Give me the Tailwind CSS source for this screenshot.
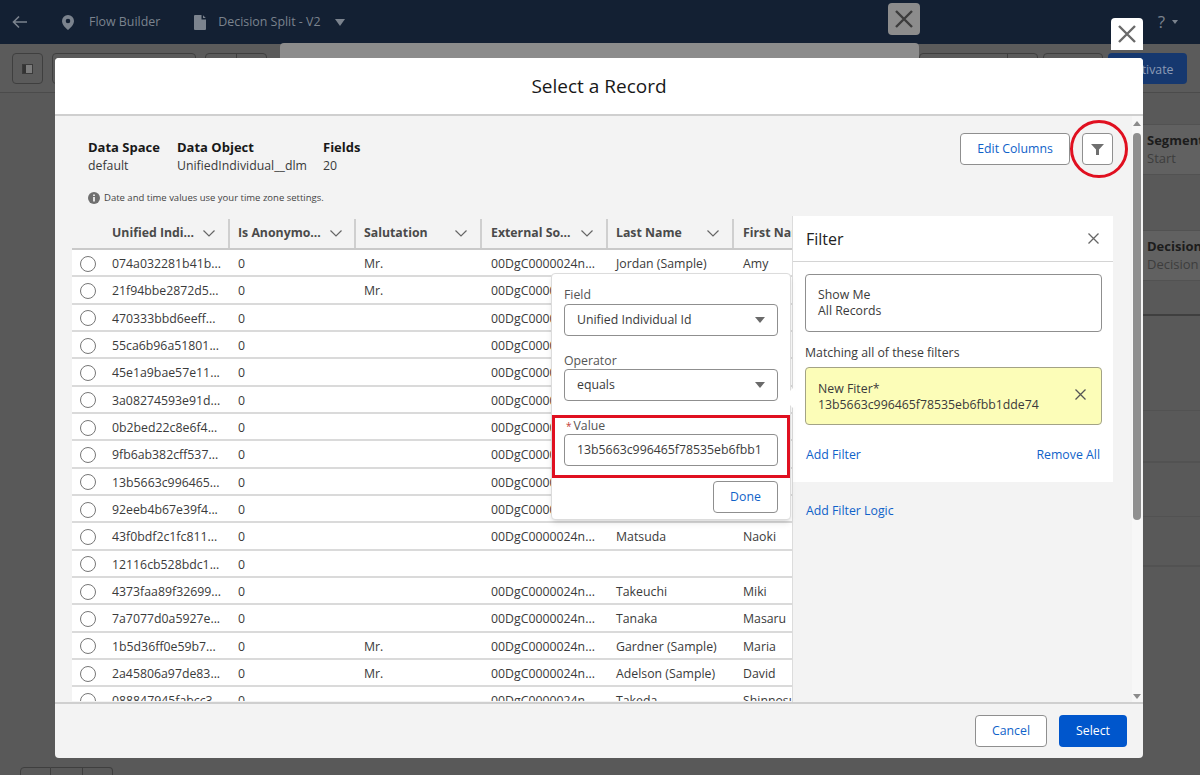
<!DOCTYPE html>
<html lang="en">
<head>
    <meta charset="UTF-8">
    <meta name="viewport" content="width=device-width, initial-scale=1.0">
    <title>Select a Record</title>
    <script src="https://cdn.jsdelivr.net/npm/@tailwindcss/browser@4"></script>
</head>
<body class="relative h-[775px] w-[1200px] overflow-hidden bg-[#595959] font-['Open_Sans','Noto_Sans',sans-serif] text-[12.3px] text-[#3a3a3a]">

    <!-- page behind the modal -->
    <header class="flex h-[44px] items-center bg-[#132033] text-[12.4px] text-[#7b838e]">
        <svg class="ml-[12px] w-[16px] h-[14px]" viewBox="0 0 16 14" fill="none" stroke="#7b838e" stroke-width="1.6"><path d="M15 7H2M7 1.5 1.5 7 7 12.5"/></svg>
        <svg class="ml-[34px] w-[12px] h-[15px]" viewBox="0 0 12 15" fill="#7b838e"><path fill-rule="evenodd" d="M6 0a6 6 0 0 1 6 6c0 3.5-3.6 7.300-6 9-2.400-1.700-6-5.500-6-9a6 6 0 0 1 6-6Zm0 3.700a2.300 2.300 0 1 0 0 4.600 2.300 2.300 0 0 0 0-4.600Z"/></svg>
        <span class="ml-[15px]">Flow Builder</span>
        <svg class="ml-[34px] w-[12px] h-[15px]" viewBox="0 0 12 15" fill="#7b838e"><path d="M1 0h6.500v4.500H12V14a1 1 0 0 1-1 1H1a1 1 0 0 1-1-1V1a1 1 0 0 1 1-1Zm8 .3L11.800 3H9Z"/></svg>
        <span class="ml-[12px]">Decision Split - V2</span>
        <svg class="ml-[14px] w-[10px] h-[7px]" viewBox="0 0 10 7" fill="#7b838e"><path d="M0 0h10L5 7Z"/></svg>
        <span class="ml-auto text-[17px]">?</span>
        <svg class="ml-[7px] mr-[22px] w-[6px] h-[4px]" viewBox="0 0 6 4" fill="#7b838e"><path d="M0 0h6L3 4Z"/></svg>
    </header>
    <div class="flex h-[49px] items-start border-b border-[#4b4b4b] bg-[#5b5b5b] pt-[9px] pl-[12px] pr-[13px]">
        <div class="flex h-[31px] w-[31px] items-center justify-center rounded border border-[#3f3f3f]">
            <svg class="w-[11px] h-[10px]" viewBox="0 0 11 10"><rect width="11" height="10" fill="#7c7c7c"/><rect x=".5" y=".5" width="10" height="9" fill="none" stroke="#3a3a3a"/><rect x="1" y="1" width="3" height="8" fill="#333"/></svg>
        </div>
        <div class="ml-[9px] h-[31px] w-[144px] rounded border border-[#3f3f3f]"></div>
        <div class="ml-[9px] flex h-[31px] w-[62px] rounded border border-[#3f3f3f]"><div class="w-[31px] border-r border-[#3f3f3f]"></div></div>
        <div class="ml-auto flex h-[31px] w-[119px] justify-end rounded border border-[#3f3f3f]"><div class="w-[30px] border-l border-[#3f3f3f]"></div></div>
        <div class="ml-[5px] h-[31px] w-[60px] rounded border border-[#3f3f3f]"></div>
        <div class="ml-[5px] flex h-[31px] w-[79px] items-center rounded bg-[#16386f] pl-[20px] pt-[3px] text-[#8c9bb5]">Activate</div>
    </div>
    <div class="ml-auto w-[57px] pt-[31px] text-[13px] whitespace-nowrap overflow-hidden">
        <div class="h-[51px] border-y border-[#525252] bg-[#616161] pl-[4px] pt-[6px] leading-[18px]">
            <div class="font-bold text-[#1c1c1c]">Segment</div>
            <div class="text-[#3d3d3d]">Start</div>
        </div>
        <div class="mt-[55px] h-[51px] border-y border-[#525252] bg-[#616161] pl-[4px] pt-[6px] leading-[18px]">
            <div class="font-bold text-[#1c1c1c]">Decision</div>
            <div class="text-[#3d3d3d]">Decision</div>
        </div>
        <div class="mt-[33px] h-[96px] border-t-2 border-[#3f3f3f]"></div>
        <div class="h-[51px] border-t border-[#525252]"></div>
        <div class="h-[55px] border-t-2 border-[#525252]"></div>
        <div class="h-[49px] border-t border-[#525252]"></div>
        <div class="border-t-2 border-[#525252]"></div>
    </div>
    <div class="absolute left-[280px] top-[43px] h-[20px] w-[639px] rounded-t bg-[#8c8c8c]"></div>
    <div class="absolute left-[20px] top-[767px] flex h-[20px]">
        <div class="w-[31px] rounded-tl border border-[#3f3f3f]"></div>
        <div class="w-[32px] border-y border-r border-[#3f3f3f]"></div>
        <div class="w-[30px] rounded-tr border-y border-r border-[#3f3f3f]"></div>
    </div>

    <!-- close buttons -->
    <button class="absolute left-[888px] top-[3px] flex h-[32px] w-[32px] items-center justify-center rounded bg-[#8c8c8c]">
        <svg class="w-[18px] h-[18px]" viewBox="0 0 18 18" stroke="#3c3c3c" stroke-width="2.400"><path d="M1 1l16 16M17 1 1 17"/></svg>
    </button>
    <button class="absolute left-[1111px] top-[18px] flex h-[32px] w-[32px] items-center justify-center rounded-t bg-white">
        <svg class="w-[18px] h-[18px]" viewBox="0 0 18 18" stroke="#6a6a6a" stroke-width="2.400"><path d="M1 1l16 16M17 1 1 17"/></svg>
    </button>

    <!-- modal -->
    <div class="absolute left-[55px] top-[58px] flex h-[700px] w-[1088px] flex-col overflow-hidden rounded bg-[#f3f3f3]">
        <div class="flex h-[58px] shrink-0 items-center justify-center border-b-2 border-[#cfcfcf] bg-white pt-[1px] text-[19px] text-[#181818]">Select a Record</div>

        <div class="relative min-h-0 flex-1">
            <div class="flex h-[100px] items-start pt-[17px] pl-[33px] pr-[30px]">
                <div class="pt-[5px] leading-[18.5px]">
                    <div class="flex">
                        <div class="w-[89px]"><div class="text-[13px] font-bold text-[#181818]">Data Space</div><div>default</div></div>
                        <div class="w-[146px]"><div class="text-[13px] font-bold text-[#181818]">Data Object</div><div>UnifiedIndividual__dlm</div></div>
                        <div><div class="text-[13px] font-bold text-[#181818]">Fields</div><div>20</div></div>
                    </div>
                    <div class="mt-[14px] flex items-center gap-[4px] text-[9.500px] text-[#444]">
                        <svg class="w-[12px] h-[12px]" viewBox="0 0 12 12"><circle cx="6" cy="6" r="6" fill="#6f6f6f"/><path d="M5.200 5h1.600v4.500H5.200ZM5.200 2.500h1.600v1.500H5.200Z" fill="#fff"/></svg>
                        <span>Date and time values use your time zone settings.</span>
                    </div>
                </div>
                <button class="ml-auto h-[32px] w-[110px] rounded border border-[#8f8f8f] bg-white pt-[1px] text-[#0f62c9]">Edit Columns</button>
                <button class="ml-[12px] flex h-[32px] w-[31px] items-center justify-center rounded border border-[#8f8f8f] bg-white">
                    <svg class="w-[13px] h-[11px]" viewBox="0 0 13 11" fill="#6f6f6f"><path d="M0 0h13L8 5.500V11H5V5.500Z"/></svg>
                </button>
            </div>
            <div class="absolute left-[1015px] top-[4px] h-[58px] w-[58px] rounded-full border-[3px] border-[#e01020]"></div>

            <!-- records table -->
            <div id="records" class="ml-[17px] h-[485px] w-[721px] overflow-hidden">
                <div class="grid h-[34px] grid-cols-[32px_126px_126px_126px_126px_126px_160px] items-stretch border-b-2 border-[#c9c9c9] pt-[3px] font-bold text-[#4a4a4a]">
                    <div></div>
                    <div class="flex items-center justify-between border-r-2 border-[#cfcfcf] pl-[8px] pr-[13px]"><span>Unified Indi...</span><svg class="w-[12px] h-[7px]" viewBox="0 0 12 7" fill="none" stroke="#666" stroke-width="1.200"><path d="M.5.500 6 6 11.500.500"/></svg></div>
                    <div class="flex items-center justify-between border-r-2 border-[#cfcfcf] pl-[8px] pr-[12px]"><span>Is Anonymo...</span><svg class="w-[12px] h-[7px]" viewBox="0 0 12 7" fill="none" stroke="#666" stroke-width="1.200"><path d="M.5.500 6 6 11.500.500"/></svg></div>
                    <div class="flex items-center justify-between border-r-2 border-[#cfcfcf] pl-[8px] pr-[13px]"><span>Salutation</span><svg class="w-[12px] h-[7px]" viewBox="0 0 12 7" fill="none" stroke="#666" stroke-width="1.200"><path d="M.5.500 6 6 11.500.500"/></svg></div>
                    <div class="flex items-center justify-between border-r-2 border-[#cfcfcf] pl-[9px] pr-[13px]"><span>External So...</span><svg class="w-[12px] h-[7px]" viewBox="0 0 12 7" fill="none" stroke="#666" stroke-width="1.200"><path d="M.5.500 6 6 11.500.500"/></svg></div>
                    <div class="flex items-center justify-between border-r-2 border-[#cfcfcf] pl-[8px] pr-[13px]"><span>Last Name</span><svg class="w-[12px] h-[7px]" viewBox="0 0 12 7" fill="none" stroke="#666" stroke-width="1.200"><path d="M.5.500 6 6 11.500.500"/></svg></div>
                    <div class="flex items-center pl-[9px]"><span>First Name</span></div>
                </div>
            </div>

            <!-- filter panel -->
            <div class="absolute left-[737px] top-[100px] bottom-0 w-[340px] border-l border-[#dcdcdc] bg-[#f3f3f3]">
                <div class="h-[266px] w-[320px] bg-white">
                    <div class="flex h-[46px] items-center justify-between border-b border-[#d4d4d4] pl-[13px] pr-[14px] text-[16px] text-[#222]">
                        <span>Filter</span>
                        <svg class="w-[11px] h-[11px]" viewBox="0 0 11 11" stroke="#666" stroke-width="1.300"><path d="M.5.500l10 10M10.500.500l-10 10"/></svg>
                    </div>
                    <div class="px-[12px]">
                        <div class="mt-[12px] flex h-[58px] w-[297px] flex-col justify-center rounded border border-[#8f8f8f] pl-[12px] leading-[16px]">
                            <div>Show Me</div>
                            <div>All Records</div>
                        </div>
                        <div class="mt-[12px] leading-[17px]">Matching all of these filters</div>
                        <div class="mt-[6px] flex h-[58px] w-[297px] items-center justify-between rounded border border-[#a3a386] bg-[#fcfdb8] pl-[12px] pr-[15px] pt-[1px] leading-[16px]">
                            <div><div>New Fiter*</div><div>13b5663c996465f78535eb6fbb1dde74</div></div>
                            <svg class="mb-[4px] w-[11px] h-[11px]" viewBox="0 0 11 11" stroke="#555" stroke-width="1.300"><path d="M.5.500l10 10M10.500.500l-10 10"/></svg>
                        </div>
                        <div class="mt-[21px] flex w-[295px] justify-between pl-[1px] text-[#0f62c9]">
                            <span>Add Filter</span>
                            <span>Remove All</span>
                        </div>
                    </div>
                </div>
                <div class="mt-[20px] pl-[13px] text-[#0f62c9]">Add Filter Logic</div>
            </div>

            <!-- field popover -->
            <div class="absolute left-[496px] top-[157px] h-[247px] w-[240px] rounded border border-[#dcdcdc] bg-white px-[12px] shadow-md">
                <div class="absolute left-[234px] top-[117px] h-[14px] w-[14px] rotate-45 bg-white"></div>
                <div class="relative">
                    <div class="mt-[13px] leading-[16px] text-[#555]">Field</div>
                    <div class="mt-[1px] flex h-[32px] items-center justify-between rounded border border-[#8f8f8f] px-[12px]">
                        <span>Unified Individual Id</span>
                        <svg class="w-[10px] h-[6px]" viewBox="0 0 10 6" fill="#6a6a6a"><path d="M0 0h10L5 6Z"/></svg>
                    </div>
                    <div class="mt-[17px] leading-[16px] text-[#555]">Operator</div>
                    <div class="flex h-[32px] items-center justify-between rounded border border-[#8f8f8f] px-[12px]">
                        <span>equals</span>
                        <svg class="w-[10px] h-[6px]" viewBox="0 0 10 6" fill="#6a6a6a"><path d="M0 0h10L5 6Z"/></svg>
                    </div>
                    <div class="-mx-[12px] mt-[14px] h-[63px] border-[3px] border-[#e01020] px-[9px]">
                        <div class="mt-[1px] flex items-center gap-[2px] pl-[2px] leading-[14px] text-[#555]"><span class="text-[10px] text-[#c23934]">*</span><span>Value</span></div>
                        <div class="mt-[1px] flex h-[32px] items-center rounded border border-[#8f8f8f] px-[12px] whitespace-nowrap overflow-hidden">13b5663c996465f78535eb6fbb1</div>
                    </div>
                    <div class="mt-[3px] flex justify-end">
                        <button class="h-[32px] w-[65px] rounded border border-[#8f8f8f] bg-white text-[#0f62c9]">Done</button>
                    </div>
                </div>
            </div>

            <!-- scrollbar -->
            <div class="absolute right-[1px] top-0 bottom-0 flex w-[10px] flex-col items-center bg-[#f7f7f7]">
                <svg class="mt-[5px] w-[8px] h-[5px]" viewBox="0 0 8 5" fill="#8b8b8b"><path d="M4 0l4 5H0Z"/></svg>
                <div class="mt-[7px] h-[387px] w-[8px] rounded bg-[#8f8f8f]"></div>
                <svg class="mt-auto mb-[3px] w-[8px] h-[5px]" viewBox="0 0 8 5" fill="#8b8b8b"><path d="M4 5l4-5H0Z"/></svg>
            </div>
        </div>

        <div class="flex h-[56px] shrink-0 items-center justify-end gap-[12px] border-t-2 border-[#cfcfcf] pr-[16px]">
            <button class="h-[32px] w-[72px] rounded border border-[#8f8f8f] bg-white text-[#0f62c9]">Cancel</button>
            <button class="h-[32px] w-[68px] rounded bg-[#0056cc] text-white">Select</button>
        </div>
    </div>

    <script>
        // id, salutation, org, last name, first name
        const rows = [
            ['074a032281b41b...', 'Mr.', '00DgC0000024n...', 'Jordan (Sample)', 'Amy'],
            ['21f94bbe2872d5...', 'Mr.', '00DgC0000024n...', '', ''],
            ['470333bbd6eeff...', '', '00DgC0000024n...', '', ''],
            ['55ca6b96a51801...', '', '00DgC0000024n...', '', ''],
            ['45e1a9bae57e11...', '', '00DgC0000024n...', '', ''],
            ['3a08274593e91d...', '', '00DgC0000024n...', '', ''],
            ['0b2bed22c8e6f4...', '', '00DgC0000024n...', '', ''],
            ['9fb6ab382cff537...', '', '00DgC0000024n...', '', ''],
            ['13b5663c996465...', '', '00DgC0000024n...', '', ''],
            ['92eeb4b67e39f4...', '', '00DgC0000024n...', '', ''],
            ['43f0bdf2c1fc811...', '', '00DgC0000024n...', 'Matsuda', 'Naoki'],
            ['12116cb528bdc1...', '', '', '', ''],
            ['4373faa89f32699...', '', '00DgC0000024n...', 'Takeuchi', 'Miki'],
            ['7a7077d0a5927e...', '', '00DgC0000024n...', 'Tanaka', 'Masaru'],
            ['1b5d36ff0e59b7...', 'Mr.', '00DgC0000024n...', 'Gardner (Sample)', 'Maria'],
            ['2a45806a97de83...', 'Mr.', '00DgC0000024n...', 'Adelson (Sample)', 'David'],
            ['088847945fabcc3...', '', '00DgC0000024n...', 'Takeda', 'Shinnosuke']
        ];

        const table = document.getElementById('records');
        rows.forEach(function(r) {
            const row = document.createElement('div');
            row.className = 'grid h-[27.33px] grid-cols-[32px_126px_126px_126px_126px_126px_160px] items-center border-b-2 border-[#dadada] bg-white pt-[3px] whitespace-nowrap';
            row.innerHTML =
                '<div class="flex justify-center -mt-[1px]"><span class="h-[16px] w-[16px] rounded-full border border-[#777] bg-white"></span></div>' +
                '<div class="pl-[8px]">' + r[0] + '</div>' +
                '<div class="pl-[8px]">0</div>' +
                '<div class="pl-[8px]">' + r[1] + '</div>' +
                '<div class="pl-[9px]">' + r[2] + '</div>' +
                '<div class="pl-[8px]">' + r[3] + '</div>' +
                '<div class="pl-[9px]">' + r[4] + '</div>';
            table.appendChild(row);
        });
    </script>
</body>
</html>
